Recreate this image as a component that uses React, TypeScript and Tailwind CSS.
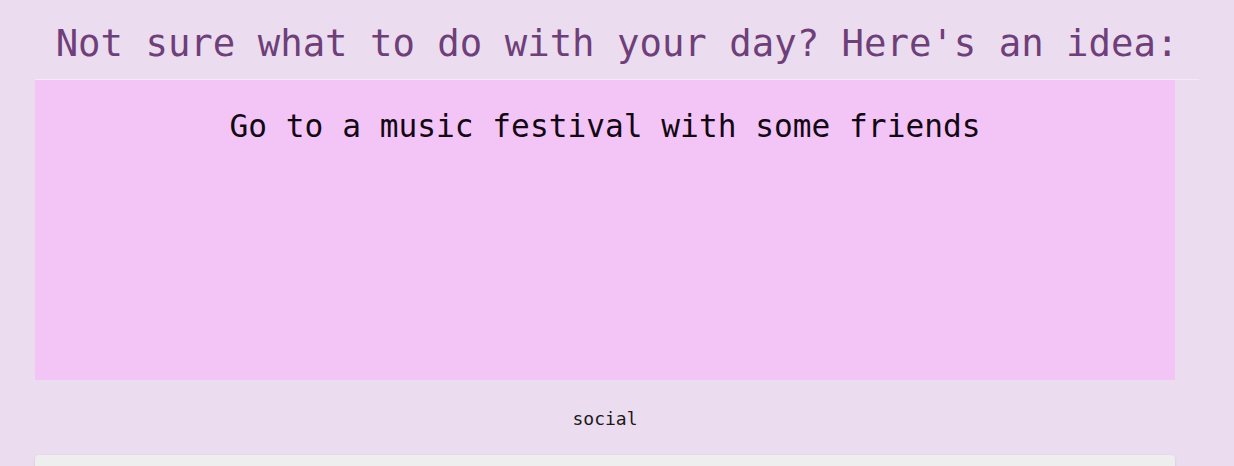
import React from 'react';

const idea = {
  activity: 'Go to a music festival with some friends',
  type: 'social',
};

export default function App() {
  return (
    <div className="min-h-screen bg-[#ecdcef] font-['DejaVu_Sans_Mono',monospace] overflow-hidden">
      {/* Header */}
      <div className="mx-[35px] h-[80px] border-b border-[#f3eaf3] pt-[25px] text-center">
        <h1 className="text-[37.3px] leading-none text-[#6e3f79] whitespace-nowrap">
          Not sure what to do with your day? Here's an idea:
        </h1>
      </div>

      {/* Activity card */}
      <div className="ml-[35px] w-[1140px] h-[300px] bg-[#f3c5f7] pt-[31px] text-center">
        <p className="text-[31.2px] leading-none text-[#140814] whitespace-nowrap">{idea.activity}</p>
      </div>

      <div className="ml-[35px] w-[1140px] pt-[30px] text-center">
        <p className="text-[18px] leading-none text-[#1a1a1a]">{idea.type}</p>
      </div>

      {/* Next card */}
      <div className="ml-[35px] mt-[27px] w-[1140px] h-[200px] rounded bg-[#eeeeee] shadow-sm"></div>
    </div>
  );
}
